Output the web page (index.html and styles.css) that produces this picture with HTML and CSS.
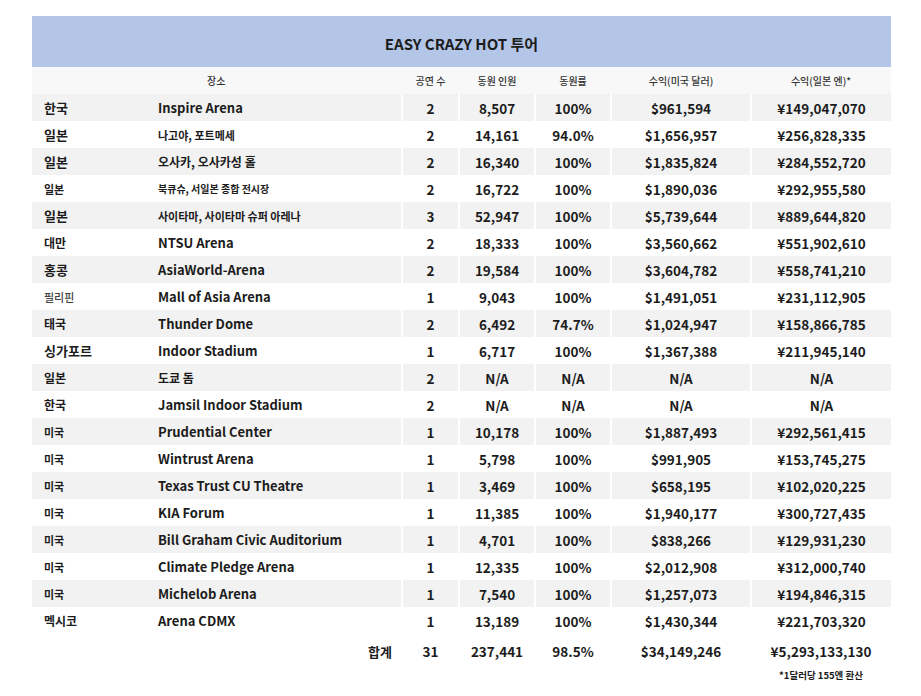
FILE: index.html
```html
<!DOCTYPE html>
<html><head>
  <meta charset="utf-8">
  <title>EASY CRAZY HOT 투어</title>
<link rel="stylesheet" href="styles.css">
</head>
<body>
<div id="sheet">
 <div class="title">EASY CRAZY HOT 투어</div>
 <table class="tour">
  <colgroup>
   <col class="c-country"><col class="c-venue"><col class="c-num"><col class="c-att"><col class="c-rate"><col class="c-usd"><col class="c-jpy">
  </colgroup>
  <thead>
   <tr>
    <th></th><th class="venuehead">장소</th><th>공연 수</th><th>동원 인원</th><th>동원률</th><th>수익(미국 달러)</th><th>수익(일본 엔)*</th>
   </tr>
  </thead>
  <tbody>
   <tr><td class="country">한국</td><td class="venue">Inspire Arena</td><td>2</td><td>8,507</td><td>100%</td><td>$961,594</td><td>¥149,047,070</td></tr>
   <tr><td class="country">일본</td><td class="venue ko sm">나고야, 포트메세</td><td>2</td><td>14,161</td><td>94.0%</td><td>$1,656,957</td><td>¥256,828,335</td></tr>
   <tr><td class="country">일본</td><td class="venue ko">오사카, 오사카성 홀</td><td>2</td><td>16,340</td><td>100%</td><td>$1,835,824</td><td>¥284,552,720</td></tr>
   <tr><td class="country small">일본</td><td class="venue ko xs">북큐슈, 서일본 종합 전시장</td><td>2</td><td>16,722</td><td>100%</td><td>$1,890,036</td><td>¥292,955,580</td></tr>
   <tr><td class="country">일본</td><td class="venue ko sm">사이타마, 사이타마 슈퍼 아레나</td><td>3</td><td>52,947</td><td>100%</td><td>$5,739,644</td><td>¥889,644,820</td></tr>
   <tr><td class="country mid">대만</td><td class="venue">NTSU Arena</td><td>2</td><td>18,333</td><td>100%</td><td>$3,560,662</td><td>¥551,902,610</td></tr>
   <tr><td class="country">홍콩</td><td class="venue">AsiaWorld-Arena</td><td>2</td><td>19,584</td><td>100%</td><td>$3,604,782</td><td>¥558,741,210</td></tr>
   <tr><td class="country small light">필리핀</td><td class="venue">Mall of Asia Arena</td><td>1</td><td>9,043</td><td>100%</td><td>$1,491,051</td><td>¥231,112,905</td></tr>
   <tr><td class="country mid">태국</td><td class="venue">Thunder Dome</td><td>2</td><td>6,492</td><td>74.7%</td><td>$1,024,947</td><td>¥158,866,785</td></tr>
   <tr><td class="country">싱가포르</td><td class="venue">Indoor Stadium</td><td>1</td><td>6,717</td><td>100%</td><td>$1,367,388</td><td>¥211,945,140</td></tr>
   <tr><td class="country mid">일본</td><td class="venue ko">도쿄 돔</td><td>2</td><td>N/A</td><td>N/A</td><td>N/A</td><td>N/A</td></tr>
   <tr><td class="country mid">한국</td><td class="venue">Jamsil Indoor Stadium</td><td>2</td><td>N/A</td><td>N/A</td><td>N/A</td><td>N/A</td></tr>
   <tr><td class="country small">미국</td><td class="venue">Prudential Center</td><td>1</td><td>10,178</td><td>100%</td><td>$1,887,493</td><td>¥292,561,415</td></tr>
   <tr><td class="country small">미국</td><td class="venue">Wintrust Arena</td><td>1</td><td>5,798</td><td>100%</td><td>$991,905</td><td>¥153,745,275</td></tr>
   <tr><td class="country small">미국</td><td class="venue">Texas Trust CU Theatre</td><td>1</td><td>3,469</td><td>100%</td><td>$658,195</td><td>¥102,020,225</td></tr>
   <tr><td class="country small">미국</td><td class="venue">KIA Forum</td><td>1</td><td>11,385</td><td>100%</td><td>$1,940,177</td><td>¥300,727,435</td></tr>
   <tr><td class="country small">미국</td><td class="venue">Bill Graham Civic Auditorium</td><td>1</td><td>4,701</td><td>100%</td><td>$838,266</td><td>¥129,931,230</td></tr>
   <tr><td class="country small">미국</td><td class="venue">Climate Pledge Arena</td><td>1</td><td>12,335</td><td>100%</td><td>$2,012,908</td><td>¥312,000,740</td></tr>
   <tr><td class="country small">미국</td><td class="venue">Michelob Arena</td><td>1</td><td>7,540</td><td>100%</td><td>$1,257,073</td><td>¥194,846,315</td></tr>
   <tr><td class="country mid">멕시코</td><td class="venue">Arena CDMX</td><td>1</td><td>13,189</td><td>100%</td><td>$1,430,344</td><td>¥221,703,320</td></tr>
  </tbody>
  <tfoot>
   <tr class="total">
    <td colspan="2" class="totallabel">합계</td><td>31</td><td>237,441</td><td>98.5%</td><td>$34,149,246</td><td>¥5,293,133,130</td>
   </tr>
   <tr class="note">
    <td colspan="6"></td><td>*1달러당 155엔 환산</td>
   </tr>
  </tfoot>
 </table>
</div>
</body></html>
```

FILE: styles.css
```css
body{
  margin: 0;
  background-color: #fff;
  color: #1c1c1c;
  font-family: "Noto Sans CJK KR", "Noto Sans", sans-serif;
}
div#sheet{
  margin: 16px 0 0 32px;
  width: 859px;
}
div.title{
  height: 51px;
  line-height: 56px;
  background-color: #b4c6e7;
  text-align: center;
  font-size: 15px;
  font-weight: bold;
}
table.tour{
  width: 859px;
  border-collapse: collapse;
  table-layout: fixed;
}
col.c-country{ width: 118px; }
col.c-venue{ width: 252px; }
col.c-num{ width: 57px; }
col.c-att{ width: 76px; }
col.c-rate{ width: 76px; }
col.c-usd{ width: 140px; }
col.c-jpy{ width: 140px; }

thead tr{
  background-color: #f8f8f8;
}
th{
  height: 27px;
  padding: 0;
  font-size: 10px;
  font-weight: 500;
  color: #333;
}
th.venuehead{
  text-align: left;
  padding-left: 57px;
}
td{
  height: 27px;
  padding: 0;
  text-align: center;
  font-size: 13.5px;
  font-weight: bold;
  border-left: 2px solid #fff;
  white-space: nowrap;
}
tbody tr:nth-child(odd){
  background-color: #f2f2f2;
}
td.country{
  text-align: left;
  padding-left: 12px;
  border-left: none;
  font-size: 13px;
}
td.country.mid{
  font-size: 12px;
}
td.country.small{
  font-size: 11px;
}
td.country.light{
  font-weight: 500;
  color: #444;
}
td.venue{
  text-align: left;
  padding-left: 8px;
  border-left: none;
  font-size: 13px;
}
td.venue.ko{
  font-size: 12px;
}
td.venue.ko.sm{
  font-size: 11px;
}
td.venue.ko.xs{
  font-size: 10px;
}
tr.total td{
  height: 34px;
  border-left: none;
}
td.totallabel{
  text-align: right;
  padding-right: 10px !important;
  font-size: 13px;
}
tr.note td{
  height: 14px;
  font-size: 9.5px;
  border-left: none;
  vertical-align: top;
}
```
